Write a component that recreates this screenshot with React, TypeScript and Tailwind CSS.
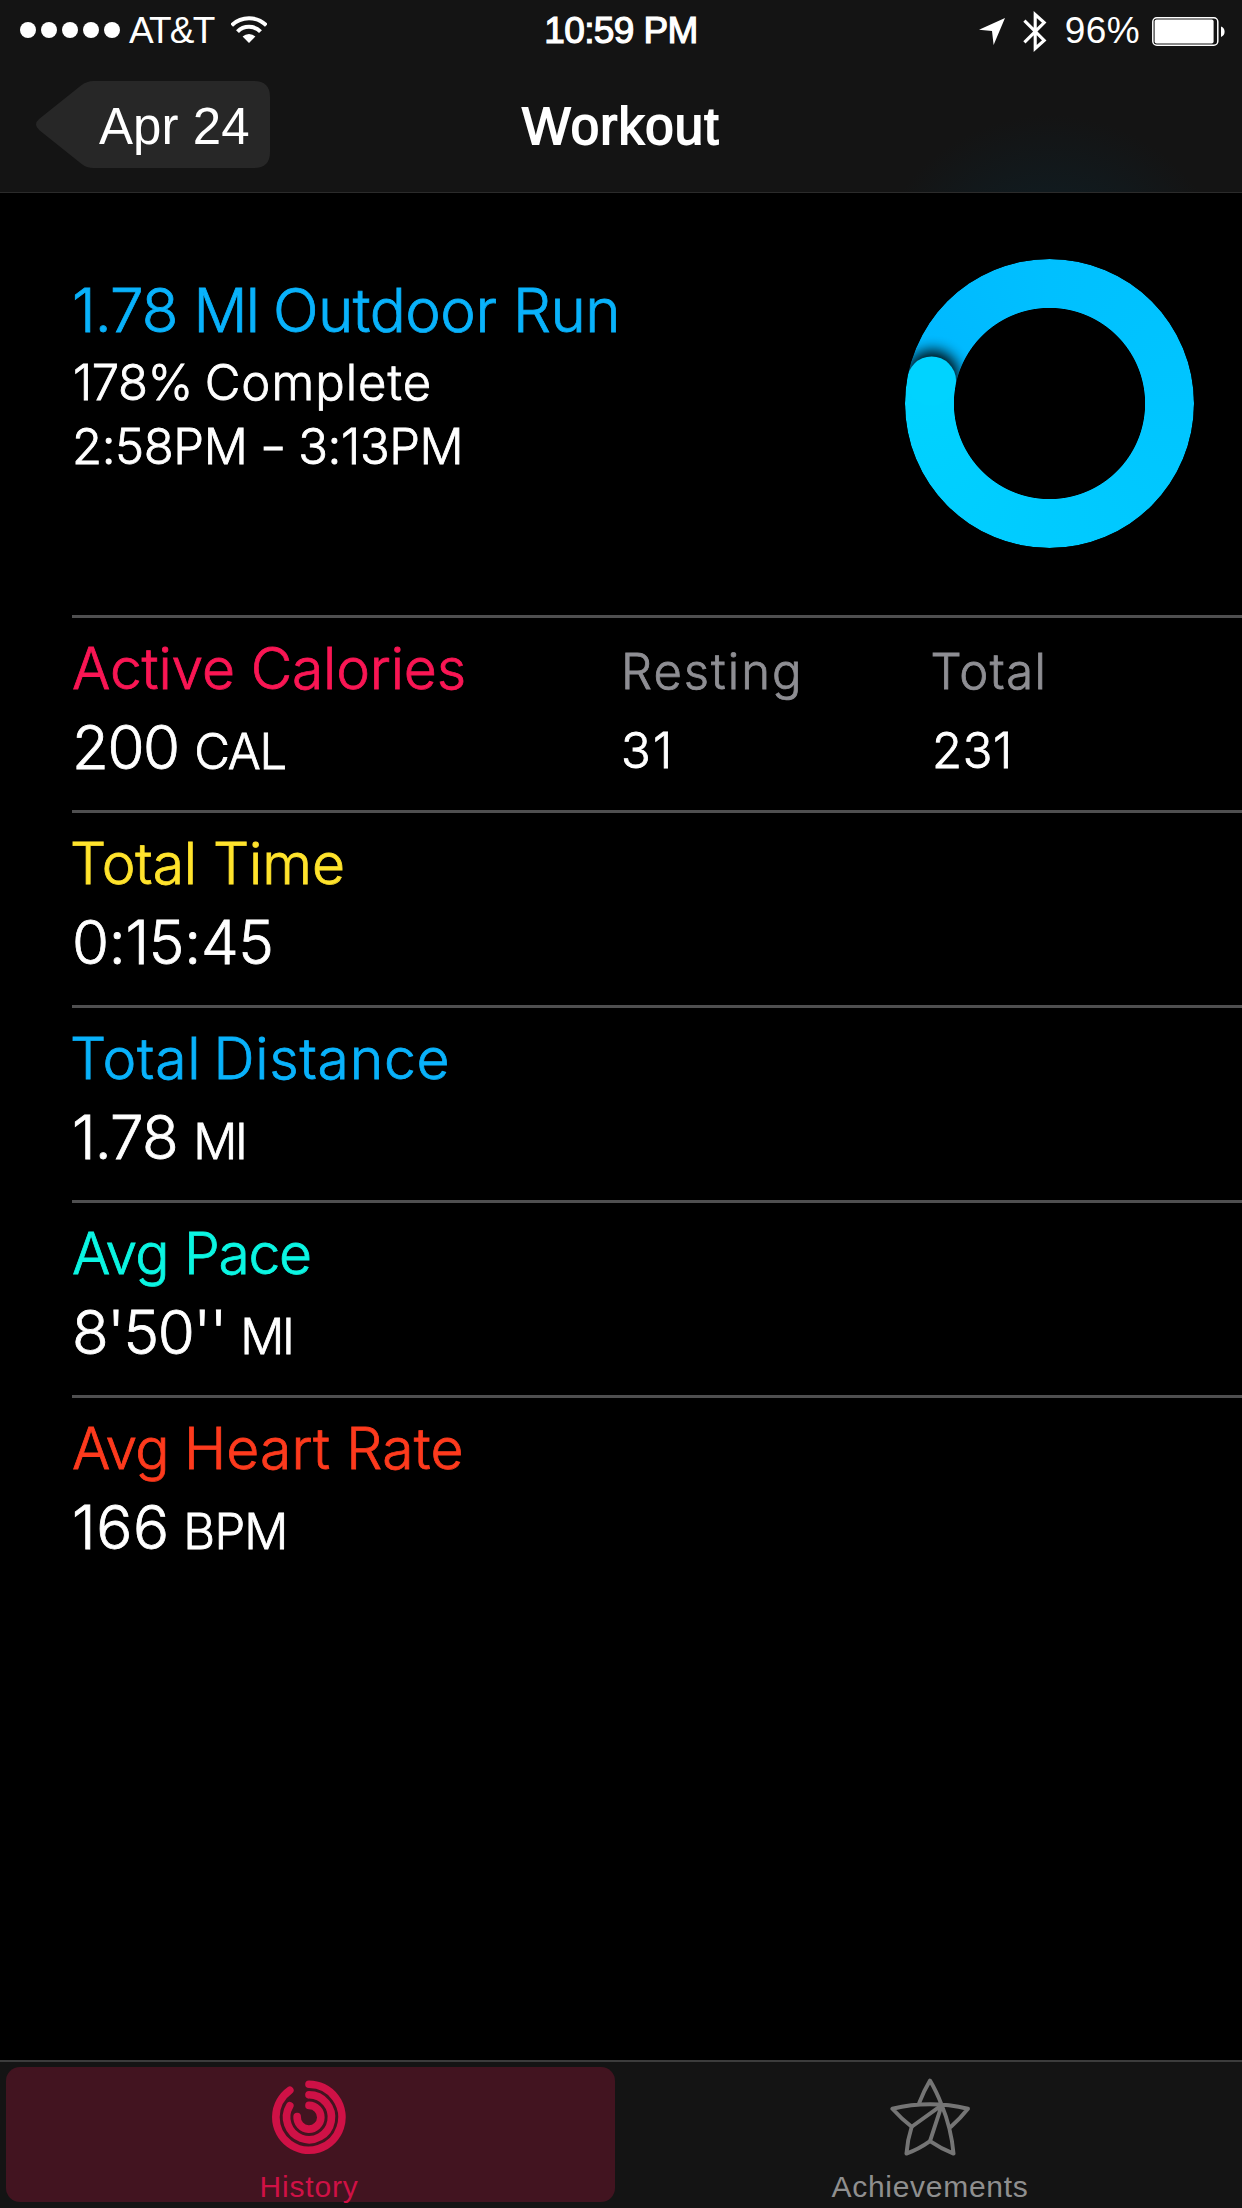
import type { ReactNode } from "react";

type Metric = {
  id: string;
  label: ReactNode;
  labelClass: string;
  value: string;
  valueClass: string;
  unit?: string;
  unitClass?: string;
  extras?: { label: string; labelClass: string; value: string; valueClass: string }[];
};

const metrics: Metric[] = [
  {
    id: "calories",
    label: "Active Calories",
    labelClass: "text-[#f91654] tracking-[-0.18px]",
    value: "200",
    valueClass: "tracking-[-1.44px]",
    unit: "CAL",
    unitClass: "tracking-[-1.24px] ml-[15.5px]",
    extras: [
      { label: "Resting", labelClass: "tracking-[2px]", value: "31", valueClass: "tracking-[2.2px]" },
      { label: "Total", labelClass: "tracking-[1.45px] -ml-[1.5px]", value: "231", valueClass: "tracking-[0.6px]" },
    ],
  },
  {
    id: "time",
    label: "Total Time",
    labelClass: "text-[#ffe32c] tracking-[-0.1px] -ml-[2px]",
    value: "0:15:45",
    valueClass: "tracking-[-0.25px]",
  },
  {
    id: "distance",
    label: "Total Distance",
    labelClass: "text-[#09b2fb] tracking-[0.75px] [word-spacing:-4.6px] -ml-[2px]",
    value: "1.78",
    valueClass: "tracking-[-0.81px]",
    unit: "MI",
    unitClass: "tracking-[-2.4px] ml-[15.4px]",
  },
  {
    id: "pace",
    label: (
      <>
        <span className="tracking-[-0.9px]">Avg </span>Pace
      </>
    ),
    labelClass: "text-[#0bf5e2] tracking-[-1.3px]",
    value: "8'50''",
    valueClass: "tracking-[-1.32px]",
    unit: "MI",
    unitClass: "tracking-[-2.4px] ml-[14.4px]",
  },
  {
    id: "heart",
    label: (
      <>
        <span className="tracking-[-0.9px]">Avg </span>Heart Rate
      </>
    ),
    labelClass: "text-[#fd3a1d] tracking-[0.15px]",
    value: "166",
    valueClass: "tracking-[0.65px]",
    unit: "BPM",
    unitClass: "tracking-[-0.79px] ml-[13.6px]",
  },
];

function WifiIcon() {
  return (
    <svg className="h-[27px] w-[36px]" viewBox="0 0 36 27" fill="none" stroke="#fff" strokeWidth="4.1">
      <path d="M0.6 9.4A24.8 24.8 0 0 1 35.4 9.4" />
      <path d="M6.5 15.6A16.2 16.2 0 0 1 29.5 15.6" />
      <path d="M18 27L11.6 20.6A9.2 9.2 0 0 1 24.4 20.6Z" fill="#fff" stroke="none" />
    </svg>
  );
}

function LocationIcon() {
  return (
    <svg className="h-[27px] w-[26px]" viewBox="0 0 26 27" fill="#fff">
      <path d="M26 0L14.6 27L13 12.9L0 11.8Z" />
    </svg>
  );
}

function BluetoothIcon() {
  return (
    <svg className="h-[41px] w-[24px]" viewBox="0 0 24 41" fill="none" stroke="#fff" strokeWidth="3.1">
      <path d="M1.4 9.6L21.2 29.4L12.2 37.5V3.5L21.2 11.6L1.4 31.4" />
    </svg>
  );
}

function BatteryIcon() {
  return (
    <svg className="h-[29px] w-[73px]" viewBox="0 0 73 29">
      <rect x="0.8" y="0.8" width="65" height="27.4" rx="4" fill="none" stroke="#fff" strokeWidth="1.5" />
      <rect x="2.6" y="2.6" width="59" height="23.8" rx="2" fill="#fff" />
      <path d="M69 9.6Q72.6 11 72.6 14.8T69 20Z" fill="#fff" />
    </svg>
  );
}

function StatusBar() {
  return (
    <div className="grid h-[62px] grid-cols-[1fr_auto_1fr] items-center text-[37px] leading-[62px]">
      <div className="flex items-center pl-[20px]">
        <div className="-mt-[2px] flex gap-[5px]">
          {[0, 1, 2, 3, 4].map((i) => (
            <span key={i} className="size-[16px] rounded-full bg-white" />
          ))}
        </div>
        <span className="ml-[9px] tracking-[-1.84px]">AT&amp;T</span>
        <span className="-mt-[3px] ml-[18px]">
          <WifiIcon />
        </span>
      </div>
      <span className="tracking-[-0.6px] [-webkit-text-stroke:1.2px_white]">10:59 PM</span>
      <div className="flex items-center justify-end pr-[17px]">
        <LocationIcon />
        <span className="ml-[18px]">
          <BluetoothIcon />
        </span>
        <span className="ml-[18px] tracking-[0.4px]">96%</span>
        <span className="ml-[12px]">
          <BatteryIcon />
        </span>
      </div>
    </div>
  );
}

function Header() {
  return (
    <header className="h-[193px] border-b border-[#2b2b2b] bg-[#141414] bg-[radial-gradient(circle_at_1050px_300px,#111a1e_110px,#141414_185px)] font-['Liberation_Sans',sans-serif]">
      <StatusBar />
      <div className="grid h-[129px] grid-cols-[1fr_auto_1fr] items-center text-[51px] leading-[129px]">
        <button className="relative ml-[36px] h-[87px] w-[234px] text-left">
          <svg className="absolute inset-x-0 -top-[2px] h-[87px] w-[234px]" viewBox="0 0 234 87" fill="#272727">
            <path d="M3.4 37.8L45 4.6Q50.5 0 58 0H218Q234 0 234 16V71Q234 87 218 87H58Q50.5 87 45 82.4L3.4 49.2Q-3.4 43.5 3.4 37.8Z" />
          </svg>
          <span className="relative block pl-[63px] leading-[87px] tracking-[0.08px]">Apr 24</span>
        </button>
        <h1 className="tracking-[1.2px] [-webkit-text-stroke:1.8px_white]">Workout</h1>
      </div>
    </header>
  );
}

function ProgressRing() {
  return (
    <div className="size-[289px] overflow-hidden rounded-full bg-[conic-gradient(from_280.8deg,#00b7ff_0deg,#00c0ff_79deg,#00c5ff_170deg,#00cbff_260deg,#00d3ff_360deg)] [mask-image:radial-gradient(circle,transparent_95.2px,#000_96px)]">
      <svg className="size-full" viewBox="0 0 289 289">
        <defs>
          <clipPath id="ahead">
            <path d="M144.5 144.5L-10 115V-10H144.5Z" />
          </clipPath>
          <filter id="soften" x="-100%" y="-100%" width="300%" height="300%">
            <feGaussianBlur stdDeviation="7" />
          </filter>
        </defs>
        <g clipPath="url(#ahead)">
          <circle cx="27.5" cy="118" r="27" opacity="0.95" filter="url(#soften)" />
        </g>
        <circle cx="26.6" cy="122" r="24.5" fill="#00d3ff" />
      </svg>
    </div>
  );
}

function Summary() {
  return (
    <section className="flex h-[422px] justify-between pr-[47.7px] pl-[72px]">
      <div className="pt-[78px] text-[49px] leading-[64.7px] [-webkit-text-stroke:0.8px]">
        <h2 className="text-[60px] leading-[79.5px] tracking-[-0.5px] text-[#09b2fb]">
          <span className="tracking-[-0.9px]">1.78 </span>
          <span className="tracking-[-2.4px]">MI </span>
          Outdoor Run
        </h2>
        <p className="ml-[1px] tracking-[1px]">
          <span className="tracking-[-0.5px] [word-spacing:-1.5px]">178% </span>
          Complete
        </p>
        <p className="tracking-[-0.4px]">
          2:58PM <span className="inline-block scale-x-75">–</span> 3:13PM
        </p>
      </div>
      <div className="pt-[65.8px]">
        <ProgressRing />
      </div>
    </section>
  );
}

function MetricRow({ m }: { m: Metric }) {
  return (
    <section className="ml-[72px] grid h-[195px] grid-cols-[549px_311px_1fr] border-t-[3px] border-[#4f4f50] pt-[13px] [-webkit-text-stroke:0.8px]">
      <div>
        <div className="text-[57px] leading-[76px] whitespace-nowrap">
          <span className={`inline-block ${m.labelClass}`}>{m.label}</span>
        </div>
        <div className="flex items-baseline text-[60px] leading-[81px]">
          <span className={m.valueClass}>{m.value}</span>
          {m.unit && <span className={`text-[49px] ${m.unitClass}`}>{m.unit}</span>}
        </div>
      </div>
      {m.extras?.map((e) => (
        <div key={e.label} className="pt-[3px] text-[49px]">
          <div className={`leading-[76px] text-[#8e8e93] ${e.labelClass}`}>{e.label}</div>
          <div className={`leading-[81px] ${e.valueClass}`}>{e.value}</div>
        </div>
      ))}
    </section>
  );
}

function RingsIcon() {
  return (
    <svg className="h-[76px] w-[76px]" viewBox="-38 -38 76 76" fill="none" stroke="#cf1146" strokeWidth="7.8" strokeLinecap="round">
      <path d="M0 -33.7A33.7 33.7 0 1 1 -19.6 -27.5" />
      <path d="M0 -22.9A22.9 22.9 0 1 1 -19.6 -11.8" />
      <path d="M0 -12.1A12.1 12.1 0 1 1 -12.1 -0.8" />
    </svg>
  );
}

function StarIcon() {
  return (
    <svg className="h-[80px] w-[86px]" viewBox="262 114 258 240" fill="none" stroke="#757575" strokeWidth="12" strokeLinejoin="round" strokeLinecap="round">
      <path d="M358 190Q372 154 391 122Q410 154 427 197Q456 268 463 345Q426 331 391 307Q356 332 319 345Q322 303 335 263Q303 238 276 208Q391 181 507 208Q484 237 455 263" />
      <path d="M335 263L427 197L391 307" />
    </svg>
  );
}

function TabBar() {
  return (
    <nav className="flex h-[148px] border-t-2 border-[#3c3c3c] bg-[#141414] pt-[5px] pl-[6px] font-['Liberation_Sans',sans-serif] text-[30px] leading-[30px]">
      <button className="flex h-[135px] w-[609px] flex-col items-center rounded-[14px] bg-[#421420] pt-[13px] pr-[3px] text-[#cf1146]">
        <RingsIcon />
        <span className="mt-[17.5px] tracking-[0.84px]">History</span>
      </button>
      <button className="flex h-[135px] flex-1 flex-col items-center pt-[11px] pl-[3px] text-[#8f8f8f]">
        <StarIcon />
        <span className="mt-[15.5px] tracking-[0.72px]">Achievements</span>
      </button>
    </nav>
  );
}

export default function App() {
  return (
    <div className="flex h-[2208px] w-[1242px] flex-col overflow-hidden bg-black font-['Inter',sans-serif] font-light text-white">
      <Header />
      <main className="flex-1">
        <Summary />
        {metrics.map((m) => (
          <MetricRow key={m.id} m={m} />
        ))}
      </main>
      <TabBar />
    </div>
  );
}
